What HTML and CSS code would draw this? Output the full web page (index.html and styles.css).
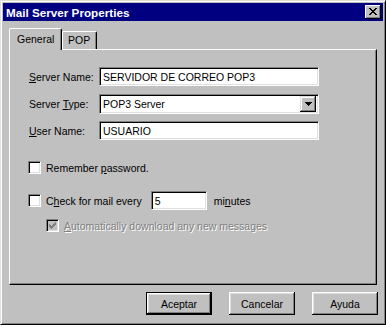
FILE: index.html
```html
<!DOCTYPE html>
<html lang="en">
<head>
    <meta charset="UTF-8">
    <title>Mail Server Properties</title>
    <link rel="stylesheet" href="styles.css">
</head>
<body>

    <div class="window">
        <div class="titlebar">
            <span class="title">Mail Server Properties</span>
            <span class="close-btn">
                <svg width="8" height="7" viewBox="0 0 8 7" shape-rendering="crispEdges">
                    <path d="M0 0h2v1h-2zM6 0h2v1h-2zM1 1h2v1h-2zM5 1h2v1h-2zM2 2h4v1h-4zM3 3h2v1h-2zM2 4h4v1h-4zM1 5h2v1h-2zM5 5h2v1h-2zM0 6h2v1h-2zM6 6h2v1h-2z" fill="#000"/>
                </svg>
            </span>
        </div>

        <div class="tabs">
            <div class="tab active">General</div>
            <div class="tab">POP</div>
        </div>

        <div class="panel">
            <div class="field-row">
                <label class="field-label"><u>S</u>erver Name:</label>
                <div class="edit wide">SERVIDOR DE CORREO POP3</div>
            </div>
            <div class="field-row">
                <label class="field-label">Server <u>T</u>ype:</label>
                <div class="edit wide combo">
                    <span class="combo-text">POP3 Server</span>
                    <span class="combo-btn">
                        <svg width="7" height="4" viewBox="0 0 7 4" shape-rendering="crispEdges">
                            <path d="M0 0h7v1h-7zM1 1h5v1h-5zM2 2h3v1h-3zM3 3h1v1h-1z" fill="#000"/>
                        </svg>
                    </span>
                </div>
            </div>
            <div class="field-row">
                <label class="field-label"><u>U</u>ser Name:</label>
                <div class="edit wide">USUARIO</div>
            </div>

            <div class="check-row remember">
                <span class="checkbox"></span>
                <span>Remember <u>p</u>assword.</span>
            </div>

            <div class="check-row every">
                <span class="checkbox"></span>
                <span>C<u>h</u>eck for mail every</span>
                <div class="edit minutes-box">5</div>
                <span>mi<u>n</u>utes</span>
            </div>

            <div class="check-row sub disabled">
                <span class="checkbox dim">
                    <svg width="7" height="7" viewBox="0 0 7 7" shape-rendering="crispEdges">
                        <path d="M0 2h1v3h-1zM1 3h1v3h-1zM2 4h1v3h-1zM3 3h1v3h-1zM4 2h1v3h-1zM5 1h1v3h-1zM6 0h1v3h-1z" fill="#808080"/>
                    </svg>
                </span>
                <span><u>A</u>utomatically download any new messages</span>
            </div>
        </div>

        <div class="buttons">
            <button class="default">Aceptar</button>
            <button>Cancelar</button>
            <button>Ayuda</button>
        </div>
    </div>

</body>
</html>
```

FILE: styles.css
```css
html, body {
    margin: 0;
    padding: 0;
    background-color: #c0c0c0;
}
body {
    font-family: "Liberation Sans", Arial, sans-serif;
    font-size: 10.5px;
    color: #000;
}
.window {
    width: 386px;
    height: 325px;
    box-sizing: border-box;
    padding: 2px;
    border: 1px solid;
    border-color: #dfdfdf #000 #000 #dfdfdf;
    box-shadow: inset 1px 1px #fff, inset -1px -1px #808080;
    background-color: #c0c0c0;
}
.titlebar {
    height: 18px;
    background-color: #000080;
    display: flex;
    align-items: center;
    justify-content: space-between;
    padding-left: 3px;
}
.title {
    color: #fff;
    font-weight: bold;
    font-size: 11.7px;
}
.close-btn {
    width: 16px;
    height: 14px;
    margin-right: 2px;
    box-sizing: border-box;
    background-color: #c0c0c0;
    box-shadow: inset -1px -1px #000, inset 1px 1px #fff, inset -2px -2px #808080;
    display: flex;
    align-items: center;
    justify-content: center;
    padding: 0 1px 1px 0;
}
.close-btn svg {
    display: block;
}
.tabs {
    display: flex;
    align-items: flex-end;
    height: 21px;
    margin: 7px 0 0 6px;
    position: relative;
    z-index: 1;
}
.tab {
    box-sizing: border-box;
    height: 18px;
    padding: 2px 6px 0 5px;
    border-top: 1px solid #fff;
    border-left: 1px solid #fff;
    border-right: 1px solid #000;
    border-top-left-radius: 2px;
    border-top-right-radius: 2px;
    box-shadow: inset -1px 0 #808080;
    background-color: #c0c0c0;
}
.tab.active {
    height: 22px;
    width: 53px;
    margin-bottom: -1px;
    padding: 4px 0 0 7px;
}
.panel {
    width: 368px;
    height: 236px;
    margin-left: 6px;
    box-sizing: border-box;
    border: 1px solid;
    border-color: #fff #000 #000 #fff;
    box-shadow: inset -1px -1px #808080;
    padding: 17px 0 0 19px;
}
.field-row {
    display: flex;
    align-items: center;
    height: 19px;
    margin-bottom: 8px;
}
.field-label {
    width: 70px;
}
.edit {
    box-sizing: border-box;
    height: 19px;
    background-color: #fff;
    border: 1px solid;
    border-color: #808080 #fff #fff #808080;
    box-shadow: inset 1px 1px #000, inset -1px -1px #dfdfdf;
    padding: 0 2px 0 3px;
    display: flex;
    align-items: center;
}
.wide {
    width: 220px;
}
.combo {
    height: 20px;
    padding-right: 2px;
    justify-content: space-between;
}
.combo-btn {
    width: 16px;
    height: 16px;
    box-sizing: border-box;
    background-color: #c0c0c0;
    box-shadow: inset -1px -1px #000, inset 1px 1px #dfdfdf, inset -2px -2px #808080, inset 2px 2px #fff;
    display: flex;
    align-items: center;
    justify-content: center;
}
.check-row {
    display: flex;
    align-items: center;
    height: 19px;
    margin-left: -1px;
}
.remember {
    margin-top: 18px;
}
.every {
    margin-top: 14px;
}
.sub {
    margin-top: 8px;
    margin-left: 17px;
    height: 15px;
}
.checkbox {
    width: 13px;
    height: 13px;
    box-sizing: border-box;
    background-color: #fff;
    border: 1px solid;
    border-color: #808080 #fff #fff #808080;
    box-shadow: inset 1px 1px #000, inset -1px -1px #dfdfdf;
    margin-right: 5px;
    display: flex;
    align-items: center;
    justify-content: center;
    flex-shrink: 0;
}
.checkbox.dim {
    background-color: #c0c0c0;
}
.checkbox svg {
    display: block;
}
.minutes-box {
    width: 56px;
    margin: 0 7px 0 9px;
}
.disabled {
    color: #808080;
    text-shadow: 1px 1px #fff;
}
.buttons {
    display: flex;
    justify-content: flex-end;
    gap: 17px;
    margin: 7px 5px 0 0;
}
button {
    width: 66px;
    height: 23px;
    box-sizing: border-box;
    font-family: "Liberation Sans", Arial, sans-serif;
    font-size: 10.5px;
    color: #000;
    background-color: #c0c0c0;
    border: none;
    padding: 0;
    box-shadow: inset -1px -1px #000, inset 1px 1px #fff, inset -2px -2px #808080, inset 2px 2px #dfdfdf;
}
button.default {
    border: 1px solid #000;
}
```
